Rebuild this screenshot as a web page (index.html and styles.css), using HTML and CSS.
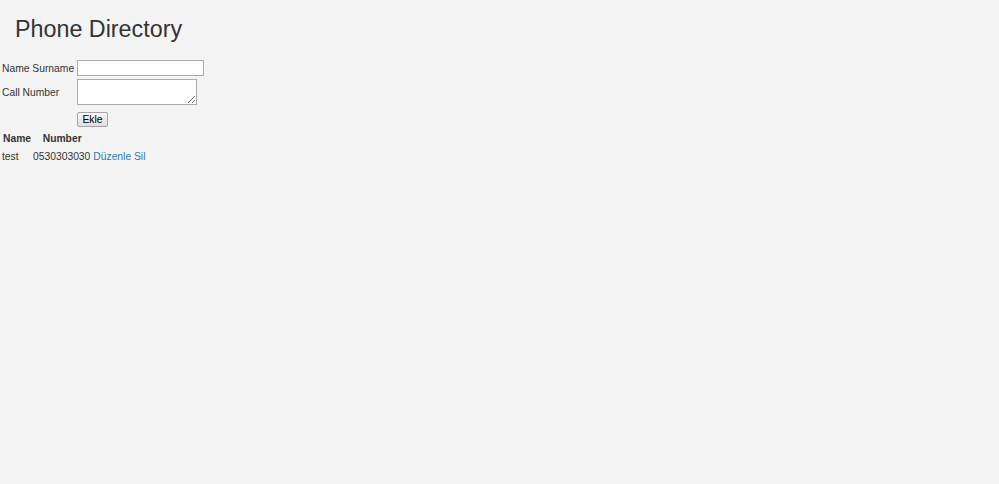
FILE: index.html
```html
<!DOCTYPE html>
<html>
<head>
<meta charset="utf-8">
<link rel="stylesheet" href="styles.css">
</head>
<body>
<h1 class="title">Phone Directory</h1>
<form class="entry">
  <table class="form-table">
    <tr class="row-name">
      <td class="label">Name Surname</td>
      <td class="ctrl"><input type="text" class="field"></td>
    </tr>
    <tr class="row-number">
      <td class="label">Call Number</td>
      <td class="ctrl"><textarea class="area"></textarea></td>
    </tr>
    <tr class="row-btn">
      <td class="label"></td>
      <td class="ctrl"><button type="button" class="btn">Ekle</button></td>
    </tr>
  </table>
</form>
<table class="list">
  <tr>
    <th>Name</th>
    <th>Number</th>
    <th></th>
  </tr>
  <tr>
    <td>test</td>
    <td>0530303030</td>
    <td class="actions"><a href="#" class="link">Düzenle</a> <a href="#" class="link">Sil</a></td>
  </tr>
</table>
</body>
</html>
```
FILE: styles.css
```css
body {
  margin: 0;
  background: #f4f4f4;
  color: #333;
  font-family: "Liberation Sans", Arial, sans-serif;
  font-size: 10.3px;
}
.title {
  font-size: 23.3px;
  font-weight: normal;
  margin: 16px 0 0 15px;
  line-height: 26px;
}
.entry {
  margin: 17px 0 0 0;
}
.form-table {
  border-collapse: separate;
  border-spacing: 0;
}
.form-table td {
  padding: 1px;
  vertical-align: middle;
}
.form-table .label {
  width: 73px;
  padding-left: 2px;
}
.row-number td {
  padding-top: 2px;
}
.field {
  display: block;
  width: 127px;
  height: 16px;
  box-sizing: border-box;
  padding: 1px 2px;
  border: 1px solid #a9a9a9;
  background: #fff;
  font: 10.3px "Liberation Sans", Arial, sans-serif;
  margin: 0;
}
.area {
  display: block;
  width: 120px;
  height: 26px;
  box-sizing: border-box;
  padding: 1px;
  border: 1px solid #a9a9a9;
  background: #fff;
  margin: 0;
  font: 10.3px "Liberation Sans", Arial, sans-serif;
}
.btn {
  display: block;
  margin-top: 5px;
  width: 31px;
  height: 15px;
  box-sizing: border-box;
  padding: 0;
  font: 10.3px "Liberation Sans", Arial, sans-serif;
  color: #000;
  border: 1px solid #a5a5a5;
  border-radius: 2px;
  background: linear-gradient(#f8f8f8, #dedede);
}
.list {
  margin: 2px 0 0 1px;
  border-collapse: separate;
  border-spacing: 0;
  line-height: 15.5px;
}
.list th {
  text-align: center;
  font-weight: bold;
  padding: 1px;
  padding-left: 2px;
}
.list td {
  padding: 1px;
}
.list .actions {
  padding-left: 2px;
}
.link {
  color: #337ab7;
  text-decoration: none;
}
```
